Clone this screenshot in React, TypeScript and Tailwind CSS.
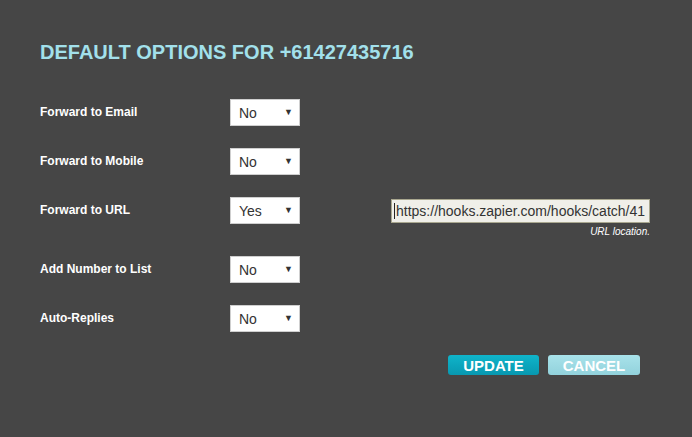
import React from "react";

function Sel({ value }: { value: string }) {
  return (
    <div className="w-[70px] h-[27px] bg-white border border-[#cfcfcf] flex items-center justify-between pl-[8px] pr-[6px] shrink-0">
      <span className="text-[14px] text-[#333] leading-none">{value}</span>
      <span className="text-[9px] text-[#333] leading-none">▼</span>
    </div>
  );
}

function Row({ label, value, extra, className }: { label: string; value: string; extra?: React.ReactNode; className?: string }) {
  return (
    <div className={"flex items-start " + (className ?? "")}>
      <div className="w-[190px] h-[27px] flex items-center text-[12px] font-bold text-white leading-none -mt-[1px]">{label}</div>
      <Sel value={value} />
      {extra}
    </div>
  );
}

export default function App() {
  return (
    <div className="w-[692px] h-[437px] bg-[#464646] pt-[40px] pl-[40px] overflow-hidden" style={{ fontFamily: '"Liberation Sans", Arial, sans-serif' }}>
      <div className="h-[24px] leading-[24px] text-[20px] font-bold text-[#a2e0eb]">DEFAULT OPTIONS FOR +61427435716</div>
      <div className="mt-[35px] flex flex-col">
        <Row label="Forward to Email" value="No" />
        <Row label="Forward to Mobile" value="No" className="mt-[22px]" />
        <Row
          label="Forward to URL"
          value="Yes"
          className="mt-[22px]"
          extra={
            <div className="ml-[91px] mt-[2px] flex flex-col items-end">
              <div className="w-[259px] h-[24px] bg-[#f0efe9] border border-[#a9a78f] flex items-center pl-[2px] overflow-hidden whitespace-nowrap">
                <span className="w-[1px] h-[16px] bg-[#222] mr-[1px] shrink-0"></span>
                <span className="text-[14px] text-[#333] leading-none">https://hooks.zapier.com/hooks/catch/41</span>
              </div>
              <div className="mt-[3px] text-[10px] italic text-white leading-[12px]">URL location.</div>
            </div>
          }
        />
        <Row label="Add Number to List" value="No" className="mt-[18px]" />
        <Row label="Auto-Replies" value="No" className="mt-[22px]" />
      </div>
      <div className="mt-[23px] pl-[408px] flex gap-[9px]">
        <div className="w-[91px] h-[20px] rounded-[3px] bg-gradient-to-b from-[#0fb4ca] to-[#0898b0] flex items-center justify-center text-[15px] font-bold text-white leading-none">UPDATE</div>
        <div className="w-[92px] h-[20px] rounded-[3px] bg-gradient-to-b from-[#a8e2ea] to-[#92d2dc] flex items-center justify-center text-[15px] font-bold text-white leading-none">CANCEL</div>
      </div>
    </div>
  );
}
